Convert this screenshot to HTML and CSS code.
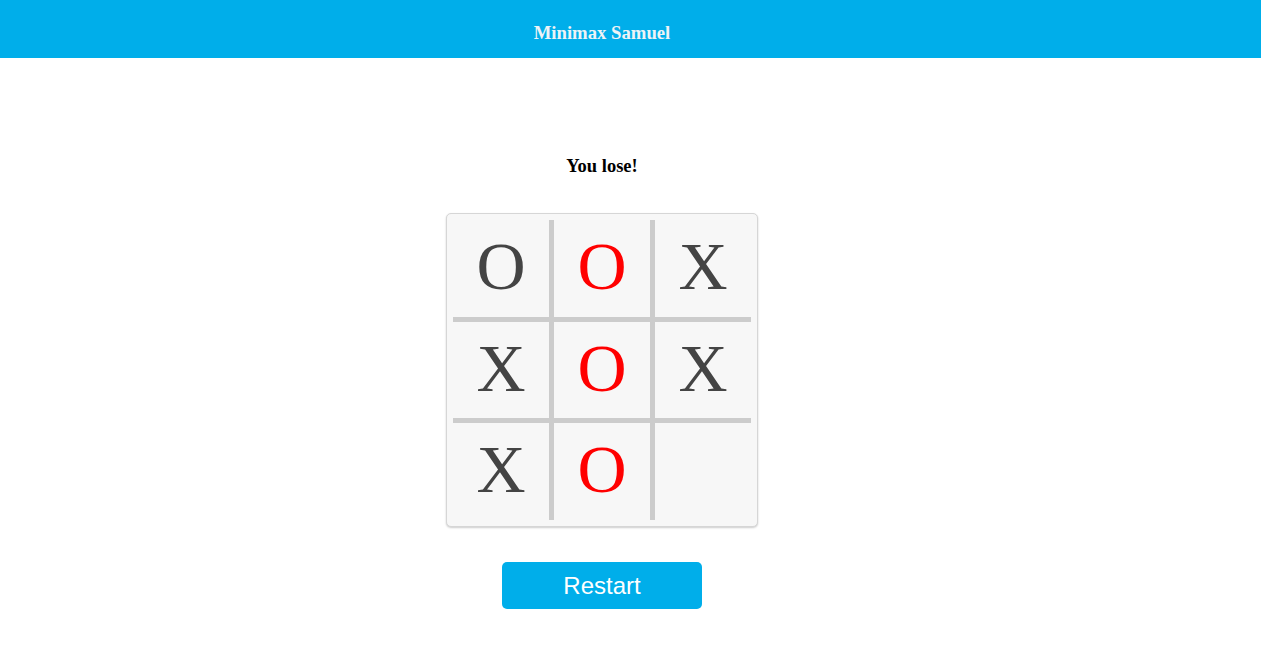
FILE: index.html
```html
<!DOCTYPE html>
<html>
<head>
<meta charset="utf-8">
<title>Minimax Samuel</title>
<link rel="stylesheet" href="styles.css">
</head>
<body>
<header class="topbar">
  <div class="page">
    <h3 class="brand">Minimax Samuel</h3>
  </div>
</header>
<main class="page game">
  <p class="status">You lose!</p>
  <div class="board">
    <div class="grid">
      <div class="cell">O</div>
      <div class="cell ai">O</div>
      <div class="cell">X</div>
      <div class="cell">X</div>
      <div class="cell ai">O</div>
      <div class="cell">X</div>
      <div class="cell">X</div>
      <div class="cell ai">O</div>
      <div class="cell"></div>
    </div>
  </div>
  <button class="restart">Restart</button>
</main>
</body>
</html>
```

FILE: styles.css
```css
html, body {
  margin: 0;
  padding: 0;
  background: #ffffff;
  font-family: "Liberation Serif", "Times New Roman", serif;
}

.page {
  width: 1204px;
}

.topbar {
  height: 58px;
  box-sizing: border-box;
  padding-top: 8px;
  background: #00aeea;
}

.brand {
  margin: 0;
  text-align: center;
  font-size: 18.72px;
  line-height: 50px;
  font-weight: bold;
  color: #eef3f6;
}

.game {
  display: flex;
  flex-direction: column;
  align-items: center;
  padding-top: 96px;
}

.status {
  margin: 0;
  font-size: 18.5px;
  line-height: 24px;
  font-weight: bold;
  color: #000;
}

.board {
  margin-top: 35px;
  padding: 6px 6px 6px;
  background: #f7f7f7;
  border: 1px solid #d6d6d6;
  border-radius: 5px;
  box-shadow: 0 1px 2px rgba(0, 0, 0, 0.2);
}

.grid {
  display: grid;
  grid-template-columns: repeat(3, 96px);
  grid-template-rows: 97px 96px 97px;
  gap: 5px;
  background: #cccccc;
}

.cell {
  background: #f7f7f7;
  display: flex;
  align-items: center;
  justify-content: center;
  padding-bottom: 5px;
  font-family: "Liberation Serif", "Times New Roman", serif;
  font-size: 68px;
  line-height: 1;
  color: #444444;
}

.cell.ai {
  color: #ff0000;
}

.restart {
  margin-top: 35px;
  width: 200px;
  height: 47px;
  border: none;
  border-radius: 5px;
  background: #00aeea;
  color: #ffffff;
  font-family: "Liberation Sans", Arial, sans-serif;
  font-size: 24px;
  padding: 0;
  cursor: pointer;
}
```
